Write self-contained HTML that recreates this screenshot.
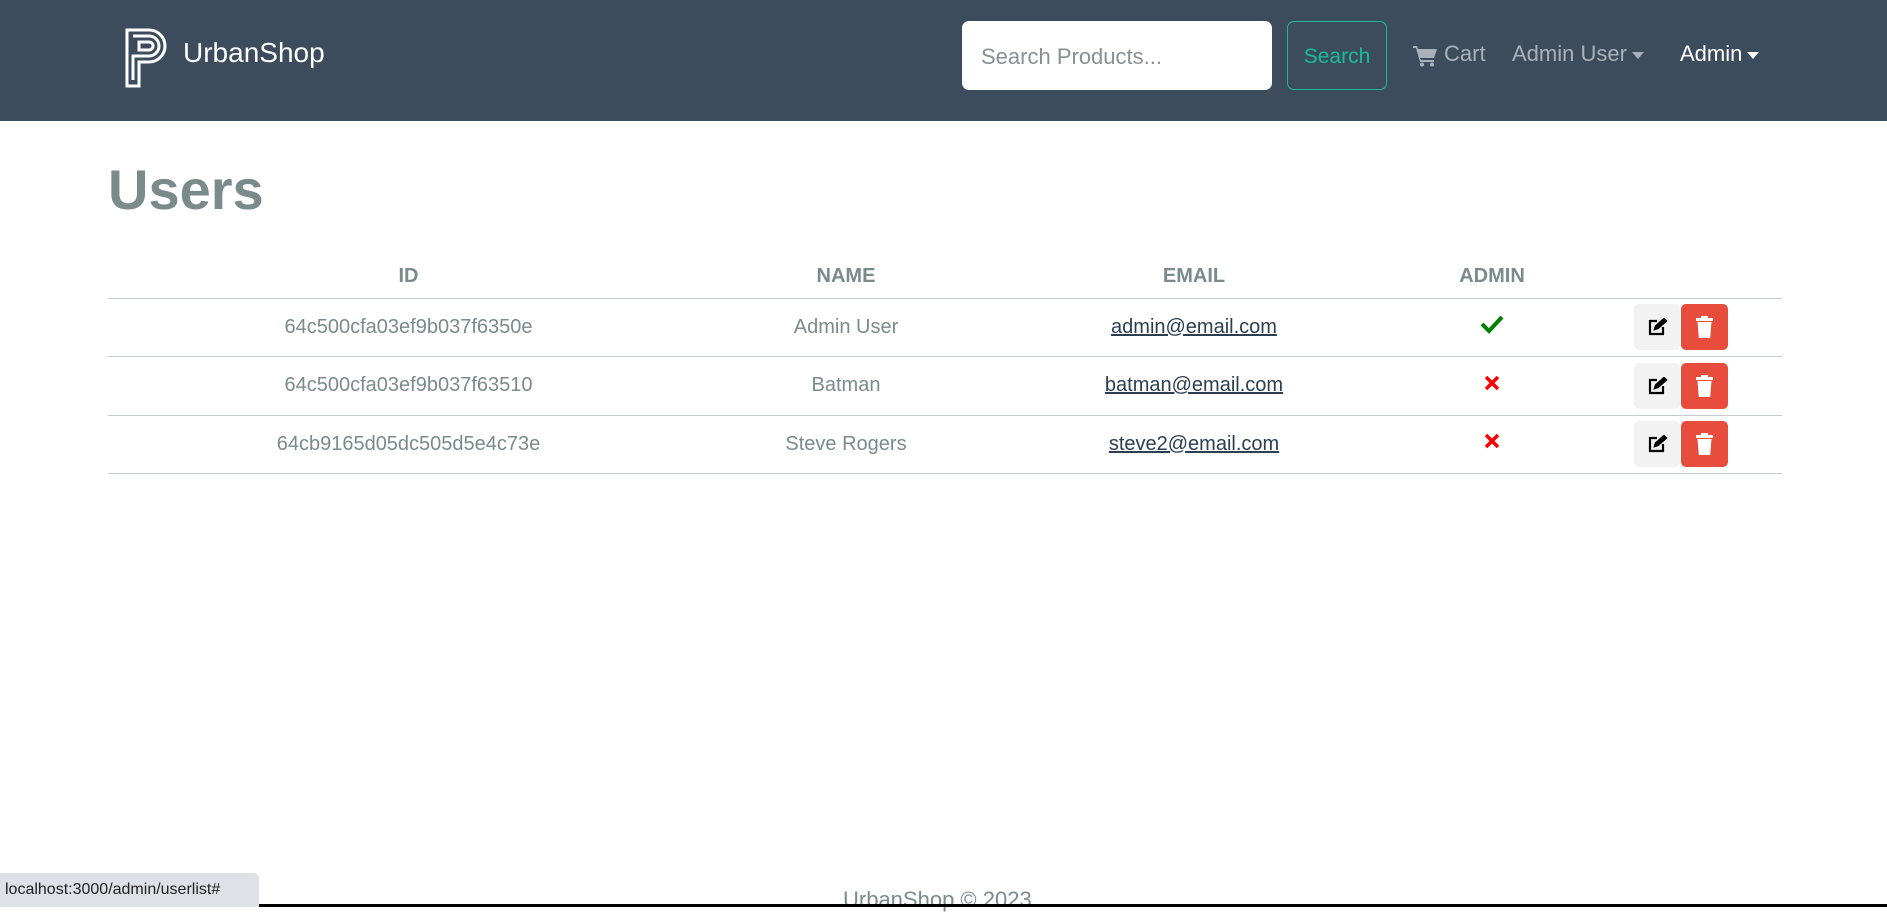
<!DOCTYPE html>
<html><head><meta charset="utf-8"><style>
*{box-sizing:border-box;margin:0;padding:0}
body{width:1887px;height:907px;overflow:hidden;background:#fff;font-family:"Liberation Sans",sans-serif;position:relative}
.nav{position:absolute;left:0;top:0;width:1887px;height:121px;background:#3c4c5d}
.brand{position:absolute;left:183px;top:37px;color:#fff;font-size:28px}
.search{position:absolute;left:962px;top:21px;width:310px;height:69px;background:#fff;border-radius:7px;color:#8a8f95;font-size:22px;padding:23px 19px}
.sbtn{position:absolute;left:1287px;top:21px;width:100px;height:69px;border:1px solid #18bc9c;border-radius:7px;color:#18bc9c;font-size:21px;text-align:center;line-height:69px}
.nl{position:absolute;top:41px;font-size:22px;color:#a9b2bb}
.caret{display:inline-block;width:0;height:0;border-left:6px solid transparent;border-right:6px solid transparent;border-top:7px solid currentColor;vertical-align:middle;margin-left:5px}
h1{position:absolute;left:108px;top:157px;font-size:56px;color:#7b8a8b;font-weight:bold}
table{position:absolute;left:108px;top:256px;width:1674px;border-collapse:collapse;font-size:20px;color:#7b8a8b;table-layout:fixed}
th{height:42px;text-align:center;font-weight:bold;vertical-align:middle;border-bottom:1px solid #c5cbcf}
td{height:58.5px;text-align:center;border-bottom:1px solid #c5cbcf}
td a{color:#2c3e50;text-decoration:underline}
.eb{display:inline-block;width:46px;height:46px;background:#f2f2f2;border-radius:5px;vertical-align:middle;position:relative}
.db{display:inline-block;width:47px;height:46px;background:#e74c3c;border-radius:5px;vertical-align:middle;position:relative;margin-left:1px}
.status{position:absolute;left:0;top:873px;width:259px;height:34px;background:#dee1e6;border-top-right-radius:5px;font-size:16px;color:#222;padding:8px 5px}
.foot{position:absolute;left:843px;top:887px;font-size:22px;color:#7b8a8b}
.bar{position:absolute;left:259px;top:904px;width:1628px;height:3px;background:#000}
</style></head><body>
<div class="nav">
<svg style="position:absolute;left:125px;top:28px" width="44" height="60" viewBox="0 0 44 60" fill="none" stroke="#fff" stroke-width="3">
<path d="M2 2H24A16 16 0 0 1 24 34H14V58H2Z"/><path d="M8 8H24A10 10 0 0 1 24 28H8V52"/><path d="M14 14H24A4 4 0 0 1 24 22H14Z"/>
</svg>
<div class="brand">UrbanShop</div>
<div class="search">Search Products...</div>
<div class="sbtn">Search</div>
<svg style="position:absolute;left:1413px;top:45px" width="24" height="22" viewBox="0 0 24 22" fill="#a9b2bb"><path d="M0 1h4l1 3h19l-3 9H7l1 2h13v2H7L3 3H0z"/><circle cx="9" cy="19.5" r="2"/><circle cx="19" cy="19.5" r="2"/></svg>
<div class="nl" style="left:1444px">Cart</div>
<div class="nl" style="left:1512px">Admin User<span class="caret"></span></div>
<div class="nl" style="left:1680px;color:#fff">Admin<span class="caret"></span></div>
</div>
<h1>Users</h1>
<table>
<colgroup><col style="width:601px"><col style="width:274px"><col style="width:422px"><col style="width:174px"><col style="width:203px"></colgroup>
<tr><th>ID</th><th>NAME</th><th>EMAIL</th><th>ADMIN</th><th></th></tr>
<tr><td>64c500cfa03ef9b037f6350e</td><td>Admin User</td><td><a>admin@email.com</a></td><td><svg width="24" height="20" viewBox="0 0 24 20"><path d="M2 10l7 7L22 3" stroke="#008000" stroke-width="4" fill="none"/></svg></td><td><span class="eb"><svg style="position:absolute;left:14px;top:14px" width="20" height="18" viewBox="0 0 20 18" fill="none" stroke="#000" stroke-width="2.2"><path d="M9 3H2v13h13V9"/><path d="M7 11l1-3 8-7 2 2-8 7z" fill="#000"/></svg></span><span class="db"><svg style="position:absolute;left:15px;top:12px" width="17" height="22" viewBox="0 0 17 22" fill="#fff"><rect x="0" y="2" width="17" height="3"/><rect x="5" y="0" width="7" height="3"/><path d="M1.5 6h14l-1.3 16H2.8z"/></svg></span></td></tr>
<tr><td>64c500cfa03ef9b037f63510</td><td>Batman</td><td><a>batman@email.com</a></td><td><svg width="18" height="18" viewBox="0 0 18 18"><path d="M3 3l12 12M15 3L3 15" stroke="#f00" stroke-width="3.5"/></svg></td><td><span class="eb"><svg style="position:absolute;left:14px;top:14px" width="20" height="18" viewBox="0 0 20 18" fill="none" stroke="#000" stroke-width="2.2"><path d="M9 3H2v13h13V9"/><path d="M7 11l1-3 8-7 2 2-8 7z" fill="#000"/></svg></span><span class="db"><svg style="position:absolute;left:15px;top:12px" width="17" height="22" viewBox="0 0 17 22" fill="#fff"><rect x="0" y="2" width="17" height="3"/><rect x="5" y="0" width="7" height="3"/><path d="M1.5 6h14l-1.3 16H2.8z"/></svg></span></td></tr>
<tr><td>64cb9165d05dc505d5e4c73e</td><td>Steve Rogers</td><td><a>steve2@email.com</a></td><td><svg width="18" height="18" viewBox="0 0 18 18"><path d="M3 3l12 12M15 3L3 15" stroke="#f00" stroke-width="3.5"/></svg></td><td><span class="eb"><svg style="position:absolute;left:14px;top:14px" width="20" height="18" viewBox="0 0 20 18" fill="none" stroke="#000" stroke-width="2.2"><path d="M9 3H2v13h13V9"/><path d="M7 11l1-3 8-7 2 2-8 7z" fill="#000"/></svg></span><span class="db"><svg style="position:absolute;left:15px;top:12px" width="17" height="22" viewBox="0 0 17 22" fill="#fff"><rect x="0" y="2" width="17" height="3"/><rect x="5" y="0" width="7" height="3"/><path d="M1.5 6h14l-1.3 16H2.8z"/></svg></span></td></tr>
</table>
<div class="foot">UrbanShop © 2023</div>
<div class="bar"></div>
<div class="status">localhost:3000/admin/userlist#</div>
</body></html>
